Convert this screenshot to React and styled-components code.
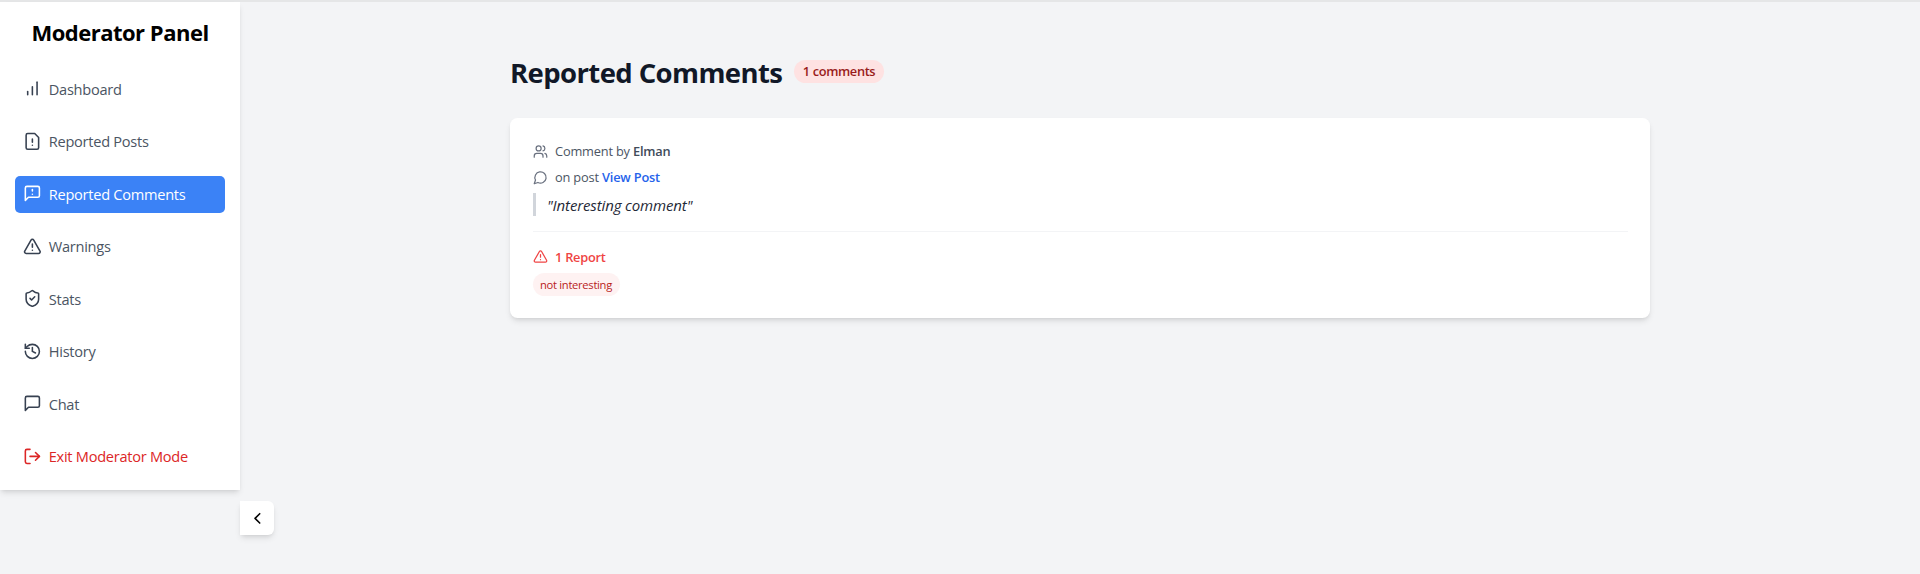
import React from "react";
import styled, { createGlobalStyle, css } from "styled-components";

const GlobalStyle = createGlobalStyle`
  *, *::before, *::after { box-sizing: border-box; }
  body {
    margin: 0;
    background: #f3f4f6;
    font-family: "Open Sans", "Noto Sans", sans-serif;
    color: #000;
  }
  h1, h2, p, blockquote { margin: 0; }
`;

const Page = styled.div`
  min-height: 574px;
  border-top: 2px solid #e5e6e7;
  display: flex;
  align-items: flex-start;
`;

const Side = styled.div`
  width: 240px;
  flex: none;
  display: flex;
  flex-direction: column;
  gap: 11px;
`;

const Sidebar = styled.aside`
  height: 488px;
  padding: 15px;
  background: #fff;
  box-shadow: 0 4px 6px -1px rgba(0, 0, 0, 0.1), 0 2px 4px -2px rgba(0, 0, 0, 0.1);
`;

const PanelTitle = styled.h2`
  height: 30px;
  line-height: 30px;
  margin-bottom: 23.5px;
  text-align: center;
  white-space: nowrap;
  font-size: 22px;
  font-weight: 700;
  letter-spacing: -0.5px;
`;

const Nav = styled.nav`
  display: flex;
  flex-direction: column;
  gap: 15px;
`;

const NavItem = styled.a`
  display: flex;
  align-items: center;
  gap: 7.5px;
  height: 37.5px;
  padding: 0 7.5px;
  border-radius: 5px;
  font-size: 14.6px;
  white-space: nowrap;
  letter-spacing: -0.27px;
  color: ${(p) => (p.$danger ? "#dc2626" : "#4b5563")};
  ${(p) =>
    p.$active &&
    css`
      background: #3b82f6;
      color: #fff;
    `}
  svg { margin-bottom: 1px; color: ${(p) => (p.$active ? "#fff" : p.$danger ? "#dc2626" : "#374151")}; }
`;

const NavLabel = styled.span`
  padding-bottom: 1.5px;
`;

const Toggle = styled.button`
  align-self: flex-end;
  margin-right: -34px;
  width: 34px;
  height: 34px;
  padding: 0;
  border: 0;
  display: grid;
  place-items: center;
  color: #000;
  background: #fff;
  border-radius: 0 6px 6px 0;
  box-shadow: 0 4px 6px -1px rgba(0, 0, 0, 0.1), 0 2px 4px -2px rgba(0, 0, 0, 0.1);
`;

const Main = styled.main`
  flex: 1;
  display: flex;
  justify-content: center;
  padding-top: 52px;
`;

const Content = styled.div`
  width: 1140px;
`;

const Heading = styled.header`
  display: flex;
  align-items: center;
  gap: 11px;
  height: 38px;
  margin-bottom: 26px;
`;

const PageTitle = styled.h1`
  width: 273px;
  font-size: 27.5px;
  line-height: 38px;
  font-weight: 700;
  letter-spacing: -0.6px;
  color: #111827;
  white-space: nowrap;
`;

const Count = styled.span`
  width: 90px;
  height: 23px;
  margin-bottom: 3px;
  line-height: 23px;
  text-align: center;
  border-radius: 12px;
  background: #fee2e2;
  color: #991b1b;
  font-size: 12.8px;
  font-weight: 600;
  letter-spacing: -0.35px;
  white-space: nowrap;
`;

const Card = styled.article`
  height: 200px;
  padding: 23.5px 22.5px 0;
  background: #fff;
  border-radius: 7.5px;
  box-shadow: 0 4px 6px -1px rgba(0, 0, 0, 0.1), 0 2px 4px -2px rgba(0, 0, 0, 0.1);
`;

const Meta = styled.div`
  display: flex;
  align-items: center;
  gap: 7.5px;
  height: 19px;
  margin-bottom: ${(p) => p.$gap};
  font-size: 12.8px;
  white-space: nowrap;
  letter-spacing: -0.18px;
  color: #4b5563;
  svg { color: #6b7280; }
`;

const Author = styled.span`
  font-weight: 600;
  color: #414b5a;
`;

const PostLink = styled.a`
  font-weight: 600;
  color: #2563eb;
`;

const Quote = styled.blockquote`
  height: 23px;
  line-height: 24px;
  padding-left: 11.5px;
  border-left: 3px solid #d1d5db;
  font-size: 15px;
  font-style: italic;
  letter-spacing: -0.13px;
  color: #1f2937;
`;

const Reports = styled.section`
  margin-top: 15px;
  padding-top: 15px;
  border-top: 1px solid #f3f4f6;
`;

const ReportCount = styled.div`
  display: flex;
  align-items: center;
  gap: 7.5px;
  height: 19px;
  margin-bottom: 7px;
  font-size: 12.8px;
  font-weight: 600;
  letter-spacing: -0.25px;
  color: #ef4444;
`;

const Reason = styled.span`
  display: block;
  width: 87px;
  height: 23px;
  line-height: 23px;
  text-align: center;
  border-radius: 12px;
  background: #fef2f2;
  color: #b91c1c;
  font-size: 11.2px;
  letter-spacing: -0.3px;
  white-space: nowrap;
`;

const Svg = styled.svg`
  flex: none;
  fill: none;
  stroke: currentColor;
  stroke-width: 2;
  stroke-linecap: round;
  stroke-linejoin: round;
`;

const Icon = ({ d, size = 18.75 }) => (
  <Svg width={size} height={size} viewBox="0 0 24 24">
    {d.map((path) => (
      <path key={path} d={path} />
    ))}
  </Svg>
);

const triangle = [
  "m21.73 18-8-14a2 2 0 0 0-3.48 0l-8 14A2 2 0 0 0 4 21h16a2 2 0 0 0 1.73-3",
  "M12 9v4",
  "M12 17h.01",
];

const icons = {
  bars: ["M12 20V10", "M18 20V4", "M6 20v-4"],
  file: ["M15 2H6a2 2 0 0 0-2 2v16a2 2 0 0 0 2 2h12a2 2 0 0 0 2-2V7Z", "M12 9v4", "M12 17h.01"],
  messageWarning: ["M21 15a2 2 0 0 1-2 2H7l-4 4V5a2 2 0 0 1 2-2h14a2 2 0 0 1 2 2z", "M12 7v2", "M12 13h.01"],
  triangle,
  shield: [
    "M20 13c0 5-3.5 7.5-7.66 8.95a1 1 0 0 1-.67-.01C7.5 20.5 4 18 4 13V6a1 1 0 0 1 1-1c2 0 4.5-1.2 6.24-2.72a1.17 1.17 0 0 1 1.52 0C14.51 3.81 17 5 19 5a1 1 0 0 1 1 1z",
    "m9 12 2 2 4-4",
  ],
  history: ["M3 12a9 9 0 1 0 9-9 9.75 9.75 0 0 0-6.74 2.74L3 8", "M3 3v5h5", "M12 7v5l4 2"],
  message: ["M21 15a2 2 0 0 1-2 2H7l-4 4V5a2 2 0 0 1 2-2h14a2 2 0 0 1 2 2z"],
  exit: ["M9 21H5a2 2 0 0 1-2-2V5a2 2 0 0 1 2-2h4", "m16 17 5-5-5-5", "M21 12H9"],
  users: [
    "M16 21v-2a4 4 0 0 0-4-4H6a4 4 0 0 0-4 4v2",
    "M13 7a4 4 0 1 1-8 0a4 4 0 1 1 8 0",
    "M22 21v-2a4 4 0 0 0-3-3.87",
    "M16 3.13a4 4 0 0 1 0 7.75",
  ],
  circle: ["M7.9 20A9 9 0 1 0 4 16.1L2 22Z"],
  left: ["m15 18-6-6 6-6"],
};

const items = [
  { label: "Dashboard", icon: "bars" },
  { label: "Reported Posts", icon: "file" },
  { label: "Reported Comments", icon: "messageWarning", active: true },
  { label: "Warnings", icon: "triangle" },
  { label: "Stats", icon: "shield" },
  { label: "History", icon: "history" },
  { label: "Chat", icon: "message" },
  { label: "Exit Moderator Mode", icon: "exit", danger: true },
];

export default function App() {
  return (
    <>
      <GlobalStyle />
      <Page>
        <Side>
          <Sidebar>
            <PanelTitle>Moderator Panel</PanelTitle>
            <Nav>
              {items.map((item) => (
                <NavItem key={item.label} $active={item.active} $danger={item.danger}>
                  <Icon d={icons[item.icon]} />
                  <NavLabel>{item.label}</NavLabel>
                </NavItem>
              ))}
            </Nav>
          </Sidebar>
          <Toggle aria-label="Collapse sidebar">
            <Icon d={icons.left} />
          </Toggle>
        </Side>
        <Main>
          <Content>
            <Heading>
              <PageTitle>Reported Comments</PageTitle>
              <Count>1 comments</Count>
            </Heading>
            <Card>
              <Meta $gap="7px">
                <Icon d={icons.users} size={15} />
                <span>Comment by <Author>Elman</Author></span>
              </Meta>
              <Meta $gap="6.5px">
                <Icon d={icons.circle} size={15} />
                <span>on post <PostLink>View Post</PostLink></span>
              </Meta>
              <Quote>"Interesting comment"</Quote>
              <Reports>
                <ReportCount>
                  <Icon d={icons.triangle} size={15} />
                  <span>1 Report</span>
                </ReportCount>
                <Reason>not interesting</Reason>
              </Reports>
            </Card>
          </Content>
        </Main>
      </Page>
    </>
  );
}
